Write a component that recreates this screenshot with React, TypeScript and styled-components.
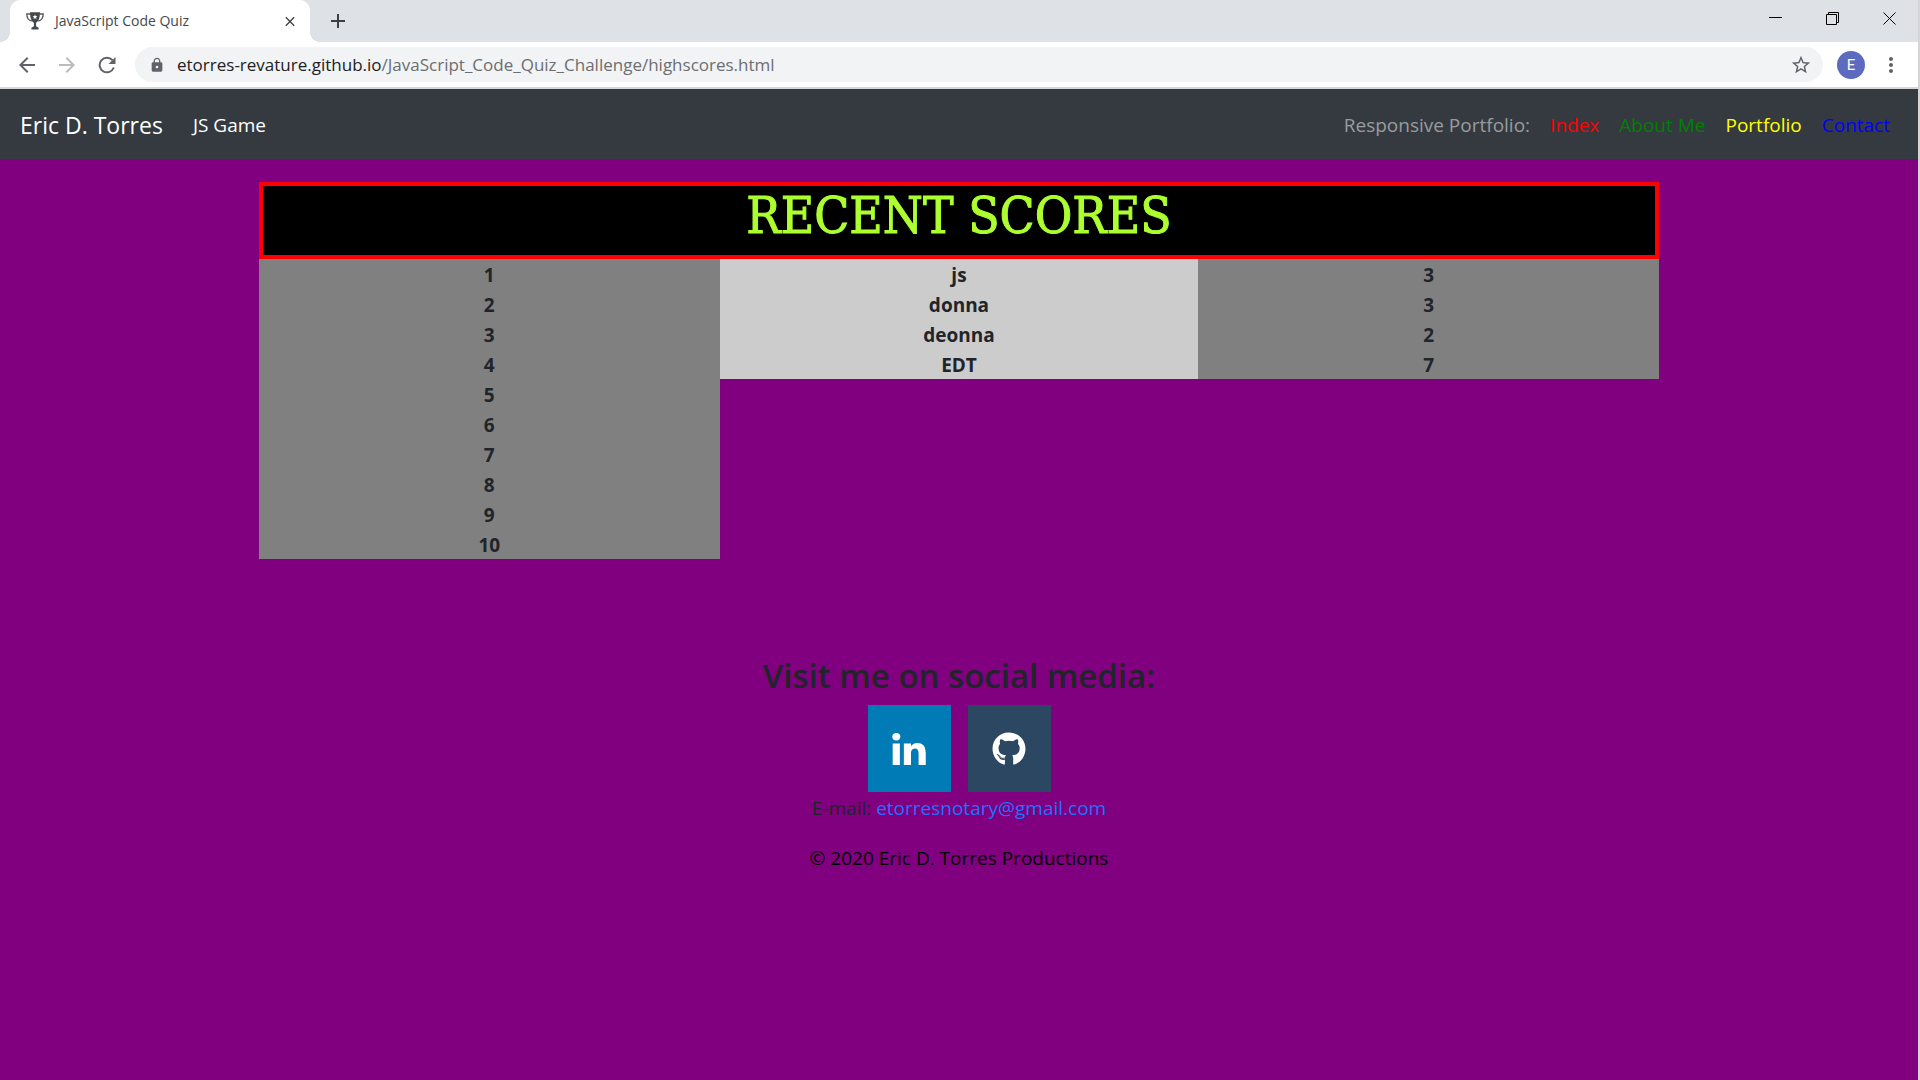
import React from "react";
import styled, { createGlobalStyle } from "styled-components";
import { FaGithub } from "react-icons/fa";
import {
  MdArrowBack,
  MdArrowForward,
  MdRefresh,
  MdLock,
  MdStarBorder,
  MdMoreVert,
  MdClose,
  MdAdd,
} from "react-icons/md";

const Global = createGlobalStyle`
  * { box-sizing: border-box; }
  body {
    margin: 0;
    background: #800080;
    font-family: "Open Sans", "Noto Sans", sans-serif;
  }
  button, input { font: inherit; }
`;

const Window = styled.div`
  min-height: 100vh;
  border-right: 2px solid #d5d5d8;
  background: #800080;
  color: #212529;
  font-size: 19px;
  line-height: 30px;
`;

const TabStrip = styled.div`
  display: flex;
  align-items: center;
  height: 42px;
  padding-left: 10px;
  background: #dee1e6;
`;

const Tab = styled.div`
  position: relative;
  display: flex;
  align-items: center;
  align-self: stretch;
  gap: 11px;
  width: 300px;
  padding: 0 12px 0 16px;
  border-radius: 10px 10px 0 0;
  background: #fff;
  color: #45494d;
  font-size: 14px;

  &::before,
  &::after {
    content: "";
    position: absolute;
    bottom: 0;
    width: 10px;
    height: 10px;
  }
  &::before {
    right: 100%;
    background: radial-gradient(circle at 0 0, transparent 10px, #fff 10px);
  }
  &::after {
    left: 100%;
    background: radial-gradient(circle at 100% 0, transparent 10px, #fff 10px);
  }
`;

const TabTitle = styled.span`
  flex: 1;
`;

const IconButton = styled.button<{ $tone?: string; $width?: number }>`
  display: flex;
  align-items: center;
  justify-content: center;
  width: ${(p) => p.$width ?? 40}px;
  height: 32px;
  padding: 0;
  border: 0;
  background: none;
  color: ${(p) => p.$tone ?? "#5f6368"};
`;

const NewTab = styled.div`
  flex: 1;
  padding-left: 12px;
`;

const WindowControls = styled.div`
  display: flex;
  height: 38px;
`;

const Toolbar = styled.div`
  display: flex;
  align-items: center;
  height: 47px;
  padding: 0 7px;
  border-bottom: 2px solid #d5d7db;
  background: #fff;
`;

const AddressBar = styled.div`
  display: flex;
  flex: 1;
  align-items: center;
  height: 35px;
  margin: 0 8px;
  padding: 0 2px 0 14px;
  border-radius: 18px;
  background: #f1f3f4;
  color: #5f6368;
`;

const Url = styled.a`
  flex: 1;
  margin-left: 12px;
  color: #6b6e72;
  font-size: 17px;
  text-decoration: none;
`;

const Host = styled.span`
  color: #202124;
`;

const Avatar = styled.button`
  width: 28px;
  height: 28px;
  margin: 0 6px;
  padding: 0;
  border: 0;
  border-radius: 50%;
  background: #5c6bc0;
  color: #fff;
  font-family: Roboto, sans-serif;
  font-size: 15px;
  line-height: 28px;
`;

const Navbar = styled.nav`
  display: flex;
  align-items: center;
  gap: 20px;
  height: 70px;
  padding: 2px 28px 0 20px;
  background: #343a40;
`;

const Brand = styled.a`
  margin-right: 10px;
  color: #fff;
  font-size: 23px;
  text-decoration: none;
`;

const NavLink = styled.a<{ $color: string }>`
  color: ${(p) => p.$color};
  text-decoration: none;
`;

const NavLabel = styled.span`
  margin-left: auto;
  color: #999c9f;
`;

const Board = styled.main`
  width: 73%;
  margin: 23px auto 0;
`;

const BoardTitle = styled.h1`
  height: 77px;
  margin: 0;
  border: 4px solid #f00;
  background: #000;
  color: #adff2f;
  font-family: "DejaVu Serif Condensed", "DejaVu Serif", serif;
  font-size: 51px;
  font-weight: 400;
  line-height: 60px;
  text-align: center;
  -webkit-text-stroke: 1px #adff2f;
`;

const Columns = styled.div`
  display: grid;
  grid-template-columns: 461fr 479fr 461fr;
  align-items: start;
`;

const Column = styled.ol<{ $shade: string }>`
  margin: 0;
  padding: 0;
  background: ${(p) => p.$shade};
  font-weight: 700;
  list-style: none;
  text-align: center;
`;

const Entry = styled.li`
  height: 30px;
  padding-top: 1px;
`;

const Footer = styled.footer`
  display: flex;
  flex-direction: column;
  align-items: center;
  padding-top: 92px;
`;

const FooterTitle = styled.h2`
  margin: 0 0 5px;
  font-size: 33px;
  font-weight: 600;
  line-height: 49px;
`;

const Socials = styled.div`
  display: flex;
  gap: 17px;
`;

const SocialLink = styled.a<{ $fill: string }>`
  display: flex;
  align-items: center;
  justify-content: center;
  width: 83px;
  height: 87px;
  background: ${(p) => p.$fill};
  color: #fff;
`;

const FooterText = styled.p<{ $color?: string }>`
  margin: 1px 0 19px;
  color: ${(p) => p.$color ?? "inherit"};
`;

const MailLink = styled.a`
  color: #1a73ff;
  text-decoration: none;
`;

const Trophy = () => (
  <svg width="18" height="18" viewBox="0 0 18 18" aria-hidden="true">
    <path
      fill="none"
      stroke="#55585b"
      strokeWidth="1.3"
      d="M4 2H.8c0 4 1.6 6.400 5 7M14 2h3.200c0 4-1.600 6.400-5 7"
    />
    <path fill="#45484b" d="M4 .3h10c0 5-1.200 9-3.900 10.500v3.400l2.500 1.600v1.700H5.400v-1.700l2.500-1.600v-3.400C5.200 9.300 4 5.300 4 .3z" />
    <path fill="#fff" d="M9 2.500l.7 1.500 1.600.2-1.200 1.200.3 1.600L9 6.200 7.600 7l.3-1.600-1.200-1.200L8.300 4z" />
  </svg>
);

const Reload = () => (
  <svg width="18" height="18" viewBox="0 0 18 18" aria-hidden="true">
    <path fill="none" stroke="currentColor" strokeWidth="2" d="M15.800 11.500A7.300 7.300 0 1 1 14.500 4.200" />
    <path fill="currentColor" d="M17.500 1v7h-7z" />
  </svg>
);

const LinkedIn = () => (
  <svg width="34" height="32" viewBox="0 434 1536 1468" fill="currentColor" aria-hidden="true">
    <path d="M349 911v991h-330v-991h330zM370 605q1 73-50.500 122t-135.500 49h-2q-82 0-132-49t-50-122q0-74 51.500-122.500t134.500-48.500h2q83 0 133 48.500t51 122.500zM1536 1334v568h-329v-530q0-105-40.500-164.500t-126.500-59.500q-63 0-105.500 34.500t-63.500 85.500q-11 30-11 81v553h-329q2-399 2-647t-1-296l-1-48h329v144h-2q20-32 41-56t56.500-52 87-43.500 114.500-15.500q171 0 275 113.500t104 332.500z" />
  </svg>
);

const controls = [
  { name: "Minimize", d: "M0 5.500h13" },
  { name: "Restore", d: "M.5 2.500h10v10h-10zM2.500 2.500v-2h10v10h-2" },
  { name: "Close", d: "M.5.5l12 12M12.500.5l-12 12" },
];

const ranks = ["1", "2", "3", "4", "5", "6", "7", "8", "9", "10"];
const players = ["js", "donna", "deonna", "EDT"];
const scores = ["3", "3", "2", "7"];

const links = [
  { text: "Index", color: "#f00" },
  { text: "About Me", color: "#008000" },
  { text: "Portfolio", color: "#ff0" },
  { text: "Contact", color: "#00f" },
];

const List = ({ items, shade }: { items: string[]; shade: string }) => (
  <Column $shade={shade}>
    {items.map((item, i) => (
      <Entry key={i}>{item}</Entry>
    ))}
  </Column>
);

export default function App() {
  return (
    <Window>
      <Global />
      <TabStrip>
        <Tab>
          <Trophy />
          <TabTitle>JavaScript Code Quiz</TabTitle>
          <IconButton aria-label="Close tab" $tone="#3c4043" $width={16}>
            <MdClose size={17} />
          </IconButton>
        </Tab>
        <NewTab>
          <IconButton aria-label="New tab" $tone="#3c4043" $width={32}>
            <MdAdd size={24} />
          </IconButton>
        </NewTab>
        <WindowControls>
          {controls.map((c) => (
            <IconButton key={c.name} aria-label={c.name} $tone="#000" $width={57}>
              <svg width="13" height="13" viewBox="0 0 13 13" fill="none" stroke="currentColor" aria-hidden="true">
                <path d={c.d} />
              </svg>
            </IconButton>
          ))}
        </WindowControls>
      </TabStrip>
      <Toolbar>
        <IconButton aria-label="Back">
          <MdArrowBack size={24} />
        </IconButton>
        <IconButton aria-label="Forward" $tone="#babcbe">
          <MdArrowForward size={24} />
        </IconButton>
        <IconButton aria-label="Reload">
          <Reload />
        </IconButton>
        <AddressBar>
          <MdLock size={16} />
          <Url href="#">
            <Host>etorres-revature.github.io</Host>/JavaScript_Code_Quiz_Challenge/highscores.html
          </Url>
          <IconButton aria-label="Bookmark">
            <MdStarBorder size={22} />
          </IconButton>
        </AddressBar>
        <Avatar aria-label="Profile">E</Avatar>
        <IconButton aria-label="Menu">
          <MdMoreVert size={24} />
        </IconButton>
      </Toolbar>
      <Navbar>
        <Brand href="#">Eric D. Torres</Brand>
        <NavLink href="#" $color="#fff">JS Game</NavLink>
        <NavLabel>Responsive Portfolio:</NavLabel>
        {links.map((l) => (
          <NavLink key={l.text} href="#" $color={l.color}>{l.text}</NavLink>
        ))}
      </Navbar>
      <Board>
        <BoardTitle>RECENT SCORES</BoardTitle>
        <Columns>
          <List items={ranks} shade="#808080" />
          <List items={players} shade="#ccc" />
          <List items={scores} shade="#808080" />
        </Columns>
      </Board>
      <Footer>
        <FooterTitle>Visit me on social media:</FooterTitle>
        <Socials>
          <SocialLink href="#" aria-label="LinkedIn" $fill="#007bb5">
            <LinkedIn />
          </SocialLink>
          <SocialLink href="#" aria-label="GitHub" $fill="#2c4762">
            <FaGithub size={34} />
          </SocialLink>
        </Socials>
        <FooterText>
          E-mail: <MailLink href="#">etorresnotary@gmail.com</MailLink>
        </FooterText>
        <FooterText $color="#000">© 2020 Eric D. Torres Productions</FooterText>
      </Footer>
    </Window>
  );
}
